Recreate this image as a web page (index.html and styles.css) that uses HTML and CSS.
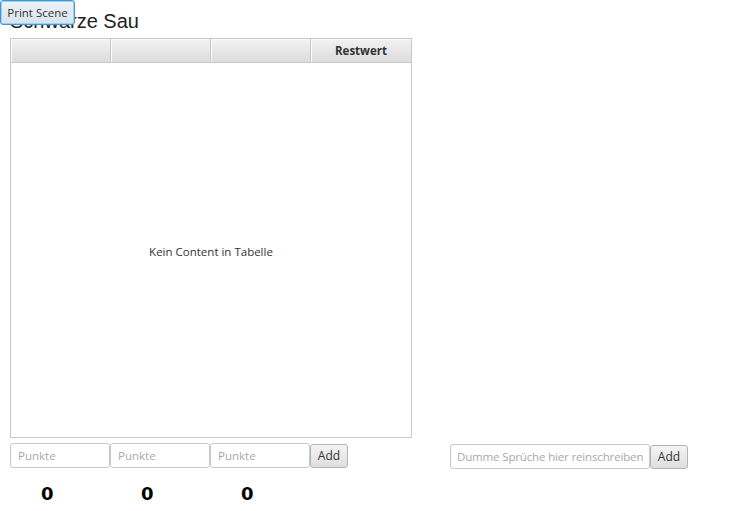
FILE: index.html
```html
<!DOCTYPE html>
<html>
<head>
<meta charset="utf-8">
<link rel="stylesheet" href="styles.css">
</head>
<body>
<button class="print-btn">Print Scene</button>
<div class="root">
  <h1 class="title">Schwarze Sau</h1>
  <div class="main">
    <div class="left">
      <div class="table">
        <div class="thead">
          <div class="th"></div>
          <div class="th"></div>
          <div class="th"></div>
          <div class="th">Restwert</div>
        </div>
        <div class="tbody">Kein Content in Tabelle</div>
      </div>
      <div class="inputs">
        <input class="field" placeholder="Punkte">
        <input class="field" placeholder="Punkte">
        <input class="field" placeholder="Punkte">
        <button class="btn">Add</button>
      </div>
      <div class="scores">
        <div class="score">0</div>
        <div class="score">0</div>
        <div class="score">0</div>
      </div>
    </div>
    <div class="right">
      <input class="field wide" placeholder="Dumme Sprüche hier reinschreiben">
      <button class="btn">Add</button>
    </div>
  </div>
</div>
</body>
</html>
```

FILE: styles.css
```css
html, body {
  margin: 0;
  padding: 0;
  background: #ffffff;
  font-family: "Open Sans", "Noto Sans", sans-serif;
  font-size: 11.5px;
  color: #333333;
}

.print-btn {
  position: absolute;
  top: 0;
  left: 0;
  width: 75px;
  height: 25px;
  margin: 0;
  padding: 0 0 1px 0;
  font-family: "Open Sans", "Noto Sans", sans-serif;
  font-size: 11.5px;
  color: #333333;
  border: 1px solid #3a9ad9;
  border-radius: 3px;
  background: linear-gradient(#eef3f7, #d7e3ec);
  box-shadow: inset 0 0 0 1px #9fd0f0;
}

.root {
  padding: 10px 0 0 10px;
}

.title {
  margin: 0;
  font-family: "Liberation Sans", Arial, sans-serif;
  font-weight: normal;
  font-size: 20px;
  line-height: 23px;
  color: #222222;
  height: 28px;
}

.main {
  display: flex;
  align-items: flex-end;
}

.left {
  display: flex;
  flex-direction: column;
  width: 402px;
}

.table {
  width: 400px;
  height: 398px;
  border: 1px solid #c8c8c8;
  display: flex;
  flex-direction: column;
}

.thead {
  display: flex;
  height: 23px;
  border-bottom: 1px solid #c8c8c8;
}

.th {
  width: 99px;
  border-right: 1px solid #c8c8c8;
  background: linear-gradient(#f2f2f2, #dcdcdc);
  box-shadow: inset 1px 1px 0 #fafafa;
  font-weight: bold;
  text-align: center;
  line-height: 23px;
  color: #333333;
}

.th:last-child {
  border-right: none;
  width: 100px;
}

.tbody {
  flex: 1;
  display: flex;
  align-items: center;
  justify-content: center;
  color: #333333;
  padding-top: 2px;
}

.inputs {
  display: flex;
  align-items: center;
  margin-top: 5px;
  height: 25px;
}

.field {
  box-sizing: border-box;
  width: 100px;
  height: 25px;
  margin: 0;
  padding: 0 7px;
  font-family: "Open Sans", "Noto Sans", sans-serif;
  font-size: 11.5px;
  color: #333333;
  border: 1px solid #c8c8c8;
  border-radius: 3px;
  background: #ffffff;
  outline: none;
}

.field::placeholder {
  color: #a8a8a8;
}

.field.wide {
  width: 200px;
  padding: 0 6px;
  letter-spacing: -0.15px;
}

.btn {
  box-sizing: border-box;
  width: 38px;
  height: 24px;
  margin: 0;
  padding: 0 0 1px 0;
  font-family: "Open Sans", "Noto Sans", sans-serif;
  font-size: 12px;
  color: #333333;
  border: 1px solid #b4b4b4;
  border-radius: 3px;
  background: linear-gradient(#f4f4f4, #dedede);
}

.scores {
  display: flex;
  margin-top: 15px;
  height: 22px;
}

.score {
  width: 100px;
  box-sizing: border-box;
  padding-left: 31px;
  font-family: "DejaVu Sans", sans-serif;
  font-weight: bold;
  font-size: 18px;
  line-height: 22px;
  color: #000000;
}

.right {
  display: flex;
  align-items: center;
  margin-left: 38px;
  margin-bottom: 36px;
}
```
